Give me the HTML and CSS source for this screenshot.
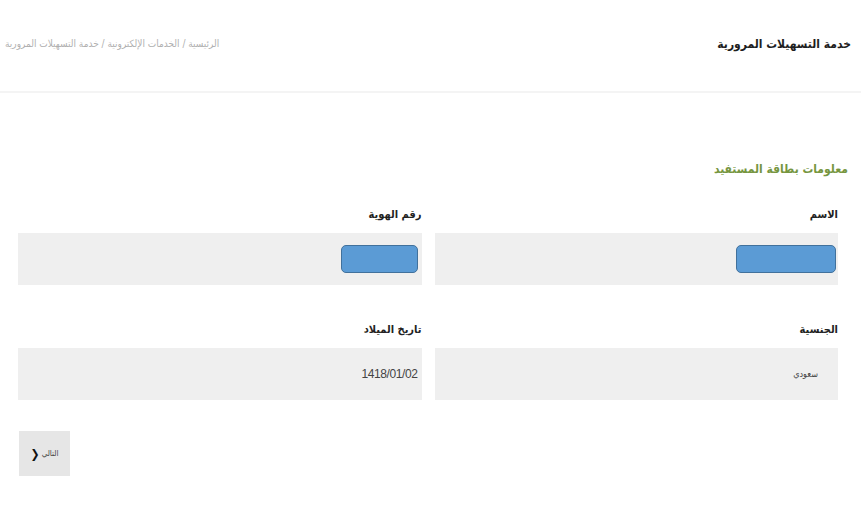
FILE: index.html
```html
<!DOCTYPE html>
<html lang="ar" dir="rtl">
<head>
<meta charset="utf-8">
<title>خدمة التسهيلات المرورية</title>
<link rel="stylesheet" href="styles.css">
</head>
<body>
<header class="topbar">
  <h1 class="page-title">خدمة التسهيلات المرورية</h1>
  <nav class="crumbs">الرئيسية / الخدمات الإلكترونية / خدمة التسهيلات المرورية</nav>
</header>
<main class="content">
  <h2 class="section-title">معلومات بطاقة المستفيد</h2>
  <div class="grid">
    <div class="field">
      <div class="label">الاسم</div>
      <div class="box box-pad-sm"><span class="mask mask-wide"></span></div>
    </div>
    <div class="field">
      <div class="label">رقم الهوية</div>
      <div class="box box-pad-md"><span class="mask mask-narrow"></span></div>
    </div>
    <div class="field">
      <div class="label">الجنسية</div>
      <div class="box box-pad-lg"><span class="value value-ar">سعودي</span></div>
    </div>
    <div class="field">
      <div class="label">تاريخ الميلاد</div>
      <div class="box box-pad-md"><span class="value value-num">1418/01/02</span></div>
    </div>
  </div>
  <div class="actions">
    <button class="next-btn"><span>التالي</span><span class="chev">&#x276E;</span></button>
  </div>
</main>
</body>
</html>
```
FILE: styles.css
```css
html, body {
  margin: 0;
  padding: 0;
  background: #ffffff;
}
body {
  font-family: "DejaVu Sans Condensed", "DejaVu Sans", sans-serif;
  color: #222;
}
.topbar {
  height: 91px;
  border-bottom: 2px solid #f4f4f4;
  display: flex;
  align-items: center;
  justify-content: space-between;
  padding: 0 10px 0 5px;
}
.page-title {
  margin: 0;
  font-size: 12px;
  font-weight: bold;
  color: #1e1e1e;
  padding-bottom: 4px;
}
.crumbs {
  font-size: 10px;
  color: #b0b0b0;
  padding-bottom: 4px;
}
.content {
  padding: 0 23px 0 18px;
}
.section-title {
  margin: 0;
  padding-top: 66px;
  margin-right: -10px;
  font-size: 12px;
  font-weight: bold;
  color: #76963f;
  line-height: 20px;
}
.grid {
  display: grid;
  grid-template-columns: 1fr 1fr;
  column-gap: 13px;
  row-gap: 37px;
  margin-top: 28px;
}
.label {
  font-size: 11px;
  font-weight: bold;
  color: #222;
  line-height: 16px;
  margin-bottom: 10px;
}
.box {
  background: #efefef;
  height: 52px;
  display: flex;
  align-items: center;
}
.box-pad-sm { padding-right: 2px; }
.box-pad-md { padding-right: 4px; }
.box-pad-lg { padding-right: 20px; }
.mask {
  display: block;
  height: 26px;
  background: #5b9bd5;
  border: 1px solid #41719c;
  border-radius: 5px;
}
.mask-wide { width: 98px; }
.mask-narrow { width: 75px; }
.value {
  color: #444;
}
.value-ar {
  font-size: 9px;
}
.value-num {
  font-family: "Liberation Sans", "DejaVu Sans", sans-serif;
  font-size: 12px;
  letter-spacing: -0.4px;
}
.actions {
  margin-top: 31px;
  display: flex;
  justify-content: flex-end;
}
.next-btn {
  width: 51px;
  height: 45px;
  margin-left: 1px;
  background: #e6e6e6;
  border: none;
  display: flex;
  align-items: center;
  justify-content: center;
  gap: 2px;
  font-family: "DejaVu Sans Condensed", "DejaVu Sans", sans-serif;
  font-size: 8px;
  color: #444;
  padding: 0;
}
.chev {
  font-size: 12px;
  font-weight: bold;
  color: #111;
}
```
